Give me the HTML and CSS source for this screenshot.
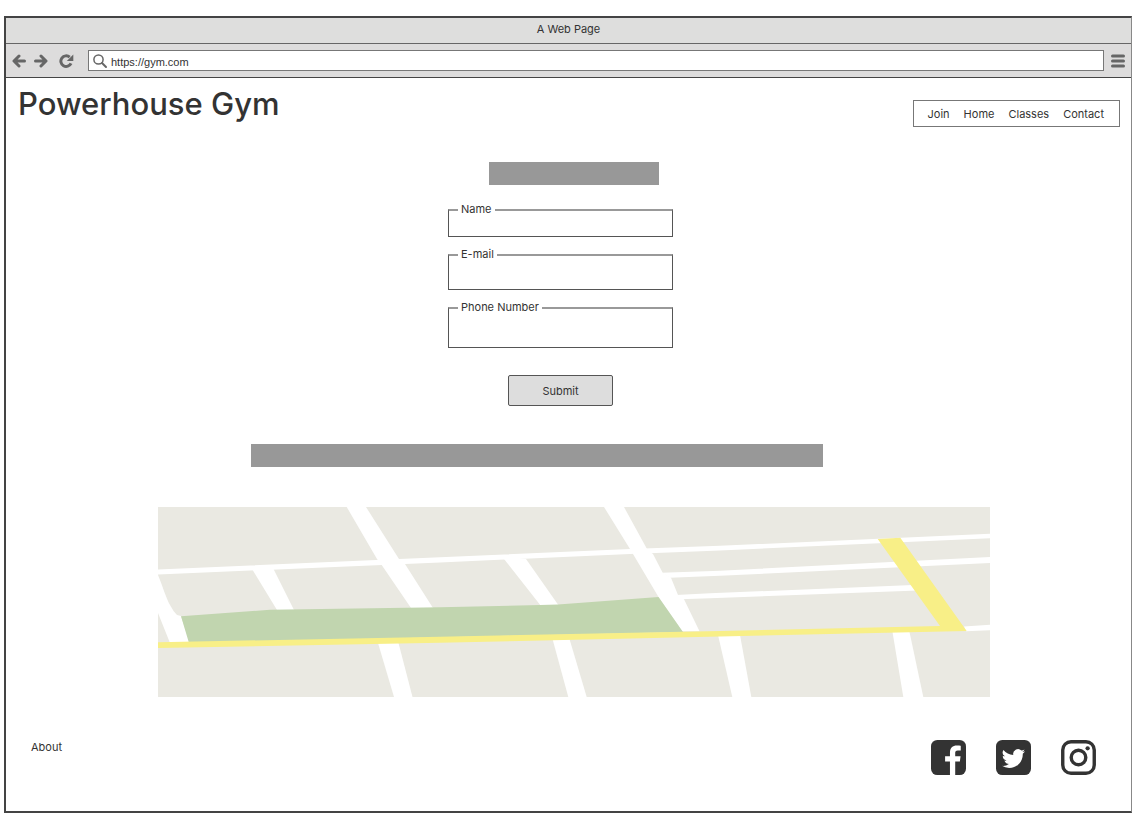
FILE: index.html
```html
<!DOCTYPE html>
<html lang="en">
<head>
<meta charset="utf-8">
<meta name="viewport" content="width=device-width, initial-scale=1">
<title>A Web Page</title>
<link rel="stylesheet" href="styles.css">
</head>
<body>
<div class="window">
  <div class="titlebar">A Web Page</div>
  <div class="toolbar">
    <button class="tool" type="button" aria-label="Back">
      <svg width="14" height="14" viewBox="0 0 14 14"><path d="M12.500 7H2.500M7 2L2 7l5 5" class="tool-line"/></svg>
    </button>
    <button class="tool tool-forward" type="button" aria-label="Forward">
      <svg width="14" height="14" viewBox="0 0 14 14"><path d="M1.500 7h10M7 2l5 5-5 5" class="tool-line"/></svg>
    </button>
    <button class="tool tool-reload" type="button" aria-label="Reload">
      <svg width="15" height="14" viewBox="0 0 15 14"><path d="M12 9.300A5.300 5.300 0 1 1 10.700 3.200" class="reload-line"/><path d="M14.300 .4v6.600H7.800z" class="tool-fill"/></svg>
    </button>
    <div class="address">
      <svg width="16" height="16" viewBox="0 0 16 16"><circle cx="6.500" cy="6.500" r="4.600" class="lens"/><path d="M10 10l4 4" class="lens-handle"/></svg>
      <input type="text" value="https://gym.com" aria-label="Address">
    </div>
    <button class="tool" type="button" aria-label="Menu">
      <svg width="14" height="14" viewBox="0 0 14 14"><path d="M1.500 2h11M1.500 7h11M1.500 12h11" class="menu-line"/></svg>
    </button>
  </div>

  <header class="header">
    <h1>Powerhouse Gym</h1>
    <nav class="nav">
      <a href="#join">Join</a>
      <a href="#home">Home</a>
      <a href="#classes">Classes</a>
      <a href="#contact">Contact</a>
    </nav>
  </header>

  <main class="main">
    <div class="bar bar-short"></div>
    <form class="form">
      <div class="field field-name">
        <label for="name">Name</label>
        <input id="name" type="text">
      </div>
      <div class="field field-email">
        <label for="email">E-mail</label>
        <input id="email" type="email">
      </div>
      <div class="field field-phone">
        <label for="phone">Phone Number</label>
        <input id="phone" type="tel">
      </div>
      <button class="submit" type="submit">Submit</button>
    </form>
    <div class="bar-row"><div class="bar bar-long"></div></div>
    <svg class="map" viewBox="0 0 832 190" role="img" aria-label="Map">
      <path class="land" d="M0 0h832v190H0z"/>
      <g class="road">
        <path d="M0 62.500L282 50.200 472 42 562 38.800 832 26.800V31.300L562 43.500 472 47 282 55.500 0 67.500z"/>
        <path d="M188.700 0H208L241 52l6 5 28 44H253L223 57l-4-5z"/>
        <path d="M94 62h21.500L136 103H119z"/>
        <path d="M0 68C5 80 8 91 12 98q3 6 7 10l4 1 9 27H12L0 106z"/>
        <path d="M346 52h22l33 47H383z"/>
        <path d="M446 0h20l23 42 6 5 9.700 18.700 8.300 5L520 88l6 4.300 15.500 32H524L500.500 90 475 47l-3-5z"/>
        <path d="M504 65.700L562 63.700 832 50v6L562 68.700l-50 2z"/>
        <path d="M518 88l34-1.700L755 78l5 5.500-208 7.800-30 1z"/>
        <path d="M806 119.500l26-1.800v5.600l-24 .9z"/>
        <path d="M220 136h20.500L254.500 190H236z"/>
        <path d="M394.500 132H411.500L428.700 190H410.300z"/>
        <path d="M560 128h22L593.300 190H574.300z"/>
        <path d="M734.500 125H751.500L765.300 190H745.300z"/>
      </g>
      <path class="park" d="M23 109.300L112 102.700 282 100.300 382 98 400 97.500 500.500 90 525 125 31 136z"/>
      <path class="highway" d="M0 135.300L282 129.700 562 124 782 119 719.700 32 742.300 30.700 808.700 124 562 129.400 282 135.700 0 141z"/>
    </svg>
  </main>

  <footer class="footer">
    <a class="about" href="#about">About</a>
    <div class="social">
      <a href="#facebook" aria-label="Facebook">
        <svg width="35" height="35" viewBox="0 0 36 36"><rect width="36" height="36" rx="6.500" class="ink"/><path d="M19.500 36V22H14.500V16.800H19.500V13C19.500 8.300 22.300 5.700 26.600 5.700c1.800 0 3.400.2 4 .3v4.700h-3c-2.200 0-2.700 1.100-2.700 2.700v3.400h5.500L29.700 22h-4.800V36z" class="paper"/></svg>
      </a>
      <a href="#twitter" aria-label="Twitter">
        <svg width="35" height="35" viewBox="0 0 36 36"><rect width="36" height="36" rx="6.500" class="ink"/><g transform="translate(6 6)"><path d="M23.950 5.650a10 10 0 0 1-2.820.77 4.950 4.950 0 0 0 2.160-2.720 10 10 0 0 1-3.120 1.190 4.920 4.920 0 0 0-8.380 4.480A13.930 13.930 0 0 1 1.640 4.230a4.900 4.900 0 0 0 1.520 6.570 4.900 4.900 0 0 1-2.230-.61v.06a4.920 4.920 0 0 0 3.950 4.830 5 5 0 0 1-2.210.08 4.940 4.940 0 0 0 4.600 3.420A9.870 9.870 0 0 1 0 20.600a14 14 0 0 0 7.550 2.210c9.050 0 14-7.500 14-13.980 0-.21 0-.42-.02-.63a9.940 9.940 0 0 0 2.420-2.550z" class="paper"/></g></svg>
      </a>
      <a href="#instagram" aria-label="Instagram">
        <svg width="35" height="35" viewBox="0 0 36 36"><rect x="1.800" y="1.800" width="32.400" height="32.400" rx="8.500" class="ring"/><circle cx="18" cy="18" r="7.500" class="ring"/><circle cx="27.400" cy="8.600" r="2.200" class="ink"/></svg>
      </a>
    </div>
  </footer>
</div>
</body>
</html>
```
FILE: styles.css
```css
* {
  box-sizing: border-box;
}

body {
  margin: 0;
  padding: 16px 0 5px 4px;
  background: #fff;
  color: #333;
  font-family: Inter, "Liberation Sans", sans-serif;
  font-size: 11px;
  line-height: 14px;
}

a {
  color: inherit;
  text-decoration: none;
}

svg {
  display: block;
}

.window {
  display: flex;
  flex-direction: column;
  min-height: calc(100vh - 21px);
  border: 2px solid #444;
  border-right: 1px solid #888;
}

.titlebar {
  padding: 4px 0 7px;
  background: #dededd;
  border-bottom: 1px solid #666;
  text-align: center;
}

.toolbar {
  display: flex;
  align-items: center;
  height: 34px;
  padding: 0 6px;
  background: #dddcdc;
  border-bottom: 1px solid #444;
}

.tool {
  padding: 0;
  border: 0;
  background: none;
}

.tool-forward {
  margin-left: 8px;
}

.tool-reload {
  margin: 0 14px 0 11px;
}

.tool-line,
.reload-line,
.menu-line,
.lens,
.lens-handle {
  fill: none;
  stroke: #666;
  stroke-width: 3;
  stroke-linecap: round;
  stroke-linejoin: round;
}

.reload-line {
  stroke-linecap: butt;
}

.lens {
  stroke-width: 1.5;
}

.lens-handle {
  stroke-width: 2;
}

.tool-fill {
  fill: #666;
}

.address {
  display: flex;
  flex: 1;
  align-items: center;
  height: 21px;
  margin-right: 7px;
  padding-left: 3px;
  background: #fff;
  border: 1px solid #777;
}

.address input {
  flex: 1;
  min-width: 0;
  padding: 2px 3px 0;
  border: 0;
  outline: 0;
  background: none;
  color: #333;
  font: 11px/14px "Liberation Sans", sans-serif;
}

.header {
  display: flex;
  align-items: flex-start;
  justify-content: space-between;
  padding: 6px 11px 0 12px;
}

h1 {
  margin: 0;
  font-size: 31px;
  font-weight: 500;
  line-height: 40px;
}

.nav {
  display: flex;
  gap: 14px;
  margin-top: 16px;
  padding: 6px 15px 5px 14px;
  border: 1px solid #777;
}

.main {
  display: flex;
  flex-direction: column;
  align-items: center;
  padding: 35px 141px 0 152px;
}

.bar {
  height: 23px;
  background: #989898;
}

.bar-short {
  width: 170px;
}

.form {
  display: flex;
  flex-direction: column;
  align-items: center;
  gap: 17px;
  width: 252px;
  margin-top: 24px;
  padding-right: 27px;
}

.field {
  position: relative;
  width: 100%;
}

.field label {
  position: absolute;
  top: -7px;
  left: 10px;
  padding: 0 3px;
  background: #fff;
}

.field input {
  display: block;
  width: 100%;
  border: 1px solid #555;
  border-top: 2px solid #999;
  outline: 0;
  background: #fff;
  color: #333;
  font: inherit;
}

.field-name input {
  height: 28px;
}

.field-email input {
  height: 36px;
}

.field-phone input {
  height: 41px;
}

.submit {
  margin-top: 10px;
  padding: 8px 33px 7px;
  border: 1px solid #555;
  border-radius: 2px;
  background: #ddd;
  color: #333;
  font: inherit;
}

.bar-row {
  display: flex;
  justify-content: center;
  width: 100%;
  margin: 38px 0 40px;
  padding-right: 74px;
}

.bar-long {
  width: 572px;
}

.map {
  width: 100%;
  height: auto;
}

.land {
  fill: #eae9e2;
}

.road {
  fill: #fff;
}

.park {
  fill: #c1d5af;
}

.highway {
  fill: #f8ef87;
}

.footer {
  display: flex;
  align-items: flex-start;
  justify-content: space-between;
  padding: 43px 35px 32px 25px;
}

.social {
  display: flex;
  gap: 30px;
}

.ink {
  fill: #333;
}

.paper {
  fill: #fff;
}

.ring {
  fill: none;
  stroke: #333;
  stroke-width: 3.5;
}
```
